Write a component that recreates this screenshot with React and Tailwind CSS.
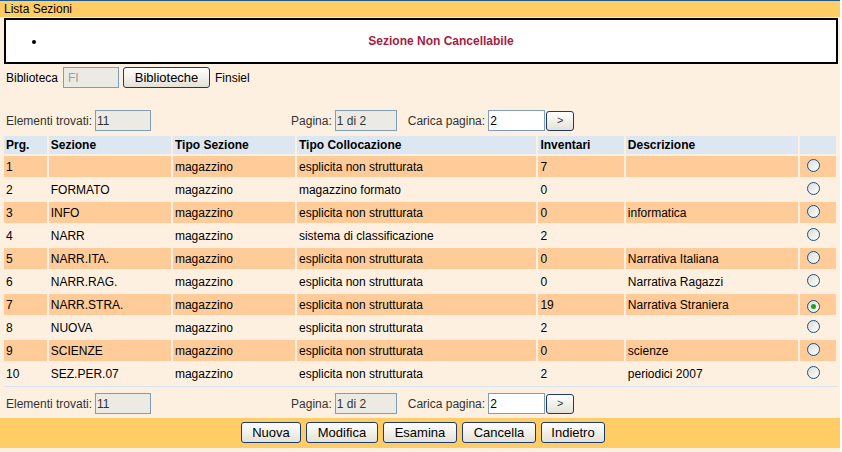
import React, { useState } from 'react';

const rows = [
  { prg: '1', sezione: '', tipo: 'magazzino', coll: 'esplicita non strutturata', inv: '7', descr: '' },
  { prg: '2', sezione: 'FORMATO', tipo: 'magazzino', coll: 'magazzino formato', inv: '0', descr: '' },
  { prg: '3', sezione: 'INFO', tipo: 'magazzino', coll: 'esplicita non strutturata', inv: '0', descr: 'informatica' },
  { prg: '4', sezione: 'NARR', tipo: 'magazzino', coll: 'sistema di classificazione', inv: '2', descr: '' },
  { prg: '5', sezione: 'NARR.ITA.', tipo: 'magazzino', coll: 'esplicita non strutturata', inv: '0', descr: 'Narrativa Italiana' },
  { prg: '6', sezione: 'NARR.RAG.', tipo: 'magazzino', coll: 'esplicita non strutturata', inv: '0', descr: 'Narrativa Ragazzi' },
  { prg: '7', sezione: 'NARR.STRA.', tipo: 'magazzino', coll: 'esplicita non strutturata', inv: '19', descr: 'Narrativa Straniera' },
  { prg: '8', sezione: 'NUOVA', tipo: 'magazzino', coll: 'esplicita non strutturata', inv: '2', descr: '' },
  { prg: '9', sezione: 'SCIENZE', tipo: 'magazzino', coll: 'esplicita non strutturata', inv: '0', descr: 'scienze' },
  { prg: '10', sezione: 'SEZ.PER.07', tipo: 'magazzino', coll: 'esplicita non strutturata', inv: '2', descr: 'periodici 2007' },
];

const btn =
  'h-[21px] px-[8px] rounded-[3px] border border-[#1c3a6e] bg-gradient-to-b from-white to-[#e4e2d6] text-[13px] text-black leading-none';

const Radio = ({ checked, onClick }) => (
  <span
    onClick={onClick}
    className="inline-flex items-center justify-center w-[13px] h-[13px] rounded-full border border-[#1c5180] bg-gradient-to-br from-[#dcdcd6] to-white cursor-pointer"
  >
    {checked && <span className="w-[5px] h-[5px] rounded-full bg-[#21a121]" />}
  </span>
);

const Paginazione = () => (
  <div className="flex items-center h-[21px] text-[12px] text-[#333]">
    <span className="ml-[6px]">Elementi trovati:</span>
    <input
      disabled
      value="11"
      readOnly
      className="ml-[3px] w-[56px] h-[21px] px-[1px] border border-[#7f9db9] bg-[#ecebe3] text-[12px] text-[#333]"
    />
    <span className="ml-[140px]">Pagina:</span>
    <input
      disabled
      value="1 di 2"
      readOnly
      className="ml-[3px] w-[62px] h-[21px] px-[1px] border border-[#7f9db9] bg-[#ecebe3] text-[12px] text-[#333]"
    />
    <span className="ml-[11px]">Carica pagina:</span>
    <input
      defaultValue="2"
      className="ml-[3px] w-[57px] h-[21px] px-[1px] border border-[#7f9db9] bg-white text-[12px] text-black outline-none"
    />
    <button className="ml-[1px] w-[28px] h-[20px] rounded-[3px] border border-[#1c3a6e] bg-gradient-to-b from-white to-[#e4e2d6] text-[11px] leading-none">
      &gt;
    </button>
  </div>
);

export default function App() {
  const [selected, setSelected] = useState(6);

  return (
    <div className="min-h-[452px] bg-white" style={{ fontFamily: '"Liberation Sans", Arial, sans-serif' }}>
      <div className="w-[840px] min-h-[452px] bg-[#fdf0e1]">
        <div className="h-[1px] bg-[#1f5a8c]" />
        <div className="h-[16px] bg-[#ffcc66] pl-[4px] text-[12px] leading-[16px] text-black">Lista Sezioni</div>

        <div className="mt-[1px] ml-[4px] mr-[2px] h-[46px] border-2 border-black bg-white flex items-center">
          <ul className="w-full list-disc pl-[40px] marker:text-black">
            <li className="text-center text-[12px] font-bold text-[#a51c3f]">Sezione Non Cancellabile</li>
          </ul>
        </div>

        <div className="mt-[3px] flex items-center h-[21px] text-[12px] text-black">
          <span className="ml-[6px]">Biblioteca</span>
          <input
            disabled
            value="FI"
            readOnly
            className="ml-[5px] w-[56px] h-[21px] px-[4px] border border-[#7f9db9] bg-[#ecebe3] text-[12px] text-[#a0a0a0]"
          />
          <button className={`ml-[4px] w-[87px] ${btn}`}>Biblioteche</button>
          <span className="ml-[5px]">Finsiel</span>
        </div>

        <div className="mt-[22px]">
          <Paginazione />
        </div>

        <table className="mt-[3px] ml-[2px] w-[836px] border-separate border-spacing-[2px] text-[12px] text-black">
          <thead>
            <tr className="h-[17px]">
              <th className="w-[43px] bg-[#dde7f1] text-left font-bold pl-[2px] py-0">Prg.</th>
              <th className="w-[123px] bg-[#dde7f1] text-left font-bold pl-[2px] py-0">Sezione</th>
              <th className="w-[123px] bg-[#dde7f1] text-left font-bold pl-[2px] py-0">Tipo Sezione</th>
              <th className="w-[242px] bg-[#dde7f1] text-left font-bold pl-[2px] py-0">Tipo Collocazione</th>
              <th className="w-[86px] bg-[#dde7f1] text-left font-bold pl-[2px] py-0">Inventari</th>
              <th className="w-[174px] bg-[#dde7f1] text-left font-bold pl-[2px] py-0">Descrizione</th>
              <th className="w-[36px] bg-[#dde7f1] py-0" />
            </tr>
          </thead>
          <tbody>
            {rows.map((r, i) => {
              const bg = i % 2 === 0 ? 'bg-[#ffcc99]' : '';
              return (
                <tr key={r.prg} className="h-[21px]">
                  <td className={`${bg} pl-[2px] py-0`}>{r.prg}</td>
                  <td className={`${bg} pl-[2px] py-0`}>{r.sezione}</td>
                  <td className={`${bg} pl-[2px] py-0`}>{r.tipo}</td>
                  <td className={`${bg} pl-[2px] py-0`}>{r.coll}</td>
                  <td className={`${bg} pl-[2px] py-0`}>{r.inv}</td>
                  <td className={`${bg} pl-[2px] py-0`}>{r.descr}</td>
                  <td className={`${bg} py-0 pl-[7px] text-left align-middle`}>
                    <span className="inline-flex pt-[2px]">
                      <Radio checked={selected === i} onClick={() => setSelected(i)} />
                    </span>
                  </td>
                </tr>
              );
            })}
          </tbody>
        </table>

        <div className="ml-[4px] mr-[2px] h-[1px] bg-[#d7e6f0]" />

        <div className="mt-[6px]">
          <Paginazione />
        </div>

        <div className="mt-[4px] h-[30px] bg-[#ffcc66] flex items-center justify-center gap-[5px] pb-[2px] pl-[6px]">
          <button className={`w-[60px] ${btn}`}>Nuova</button>
          <button className={`w-[72px] ${btn}`}>Modifica</button>
          <button className={`w-[74px] ${btn}`}>Esamina</button>
          <button className={`w-[74px] ${btn}`}>Cancella</button>
          <button className={`w-[64px] ${btn}`}>Indietro</button>
        </div>
      </div>
    </div>
  );
}
